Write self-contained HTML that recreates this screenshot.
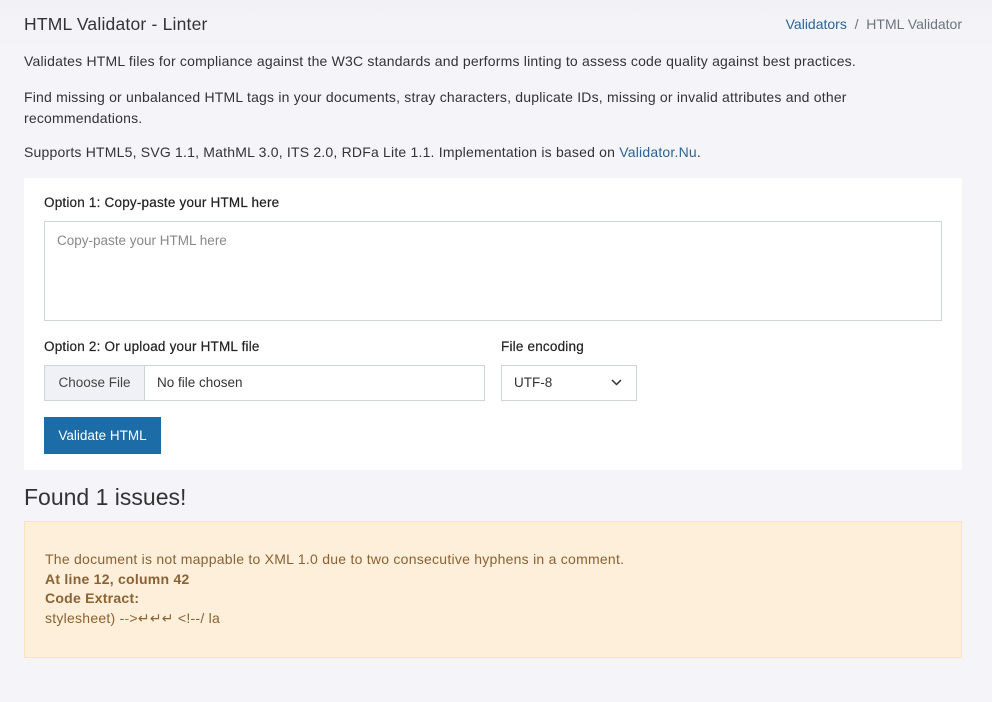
<!DOCTYPE html>
<html><head><style>
body{margin:0;background:#f5f5f9;font-family:"Liberation Sans",sans-serif;color:#333;width:992px;height:702px;overflow:hidden;}
.top{position:absolute;left:0;top:0;width:992px;height:50px;background:linear-gradient(#f2f2f6,#f5f5f9);}
h1{position:absolute;left:24px;top:14px;margin:0;font-size:17.5px;font-weight:normal;color:#333;letter-spacing:.2px}
.bc{position:absolute;right:30px;top:16px;font-size:14px;color:#6c757d}
.bc a{color:#2a6496}
p{position:absolute;left:24px;margin:0;font-size:14px;line-height:21px;width:860px;letter-spacing:.2px}
.card{position:absolute;left:24px;top:178px;width:938px;height:292px;background:#fff}
label{position:absolute;font-size:13.5px;color:#222;letter-spacing:.2px;-webkit-text-stroke:.2px #222}
.ta{position:absolute;left:20px;top:43px;width:896px;height:98px;border:1px solid #cfd4da;font-size:13.5px;color:#888}
.ta span{position:absolute;left:12px;top:11px}
.file{position:absolute;left:20px;top:187px;width:439px;height:34px;border:1px solid #cfd4da;font-size:13.5px}
.file .b{position:absolute;left:0;top:0;width:99px;height:34px;background:#eff1f6;border-right:1px solid #cfd4da;line-height:34px;text-align:center;color:#444}
.file .n{position:absolute;left:112px;top:0;line-height:34px;color:#333}
.sel{position:absolute;left:477px;top:187px;width:134px;height:34px;border:1px solid #cfd4da;font-size:13.5px;line-height:34px}
.sel span{position:absolute;left:12px}
.btn{position:absolute;left:20px;top:239px;width:117px;height:37px;background:#1c6ca8;color:#fff;font-size:13.5px;line-height:37px;text-align:center}
h2{position:absolute;left:24px;top:484px;margin:0;font-size:23px;font-weight:normal;color:#333}
.alert{position:absolute;left:24px;top:521px;width:936px;height:135px;background:#fdefd9;border:1px solid #fbe3bd;color:#8a6234;font-size:14px;line-height:19.5px;letter-spacing:.25px}
.alert div{position:absolute;left:20px;top:28px}
</style></head><body>
<div class="top"></div>
<h1>HTML Validator - Linter</h1>
<div class="bc"><a>Validators</a> &nbsp;/&nbsp; HTML Validator</div>
<p style="top:51px">Validates HTML files for compliance against the W3C standards and performs linting to assess code quality against best practices.</p>
<p style="top:87px">Find missing or unbalanced HTML tags in your documents, stray characters, duplicate IDs, missing or invalid attributes and other recommendations.</p>
<p style="top:142px">Supports HTML5, SVG 1.1, MathML 3.0, ITS 2.0, RDFa Lite 1.1. Implementation is based on <span style="color:#2a6496">Validator.Nu</span>.</p>
<div class="card">
<label style="left:20px;top:17px">Option 1: Copy-paste your HTML here</label>
<div class="ta"><span>Copy-paste your HTML here</span></div>
<label style="left:20px;top:161px">Option 2: Or upload your HTML file</label>
<label style="left:477px;top:161px">File encoding</label>
<div class="file"><div class="b">Choose File</div><div class="n">No file chosen</div></div>
<div class="sel"><span>UTF-8</span><svg style="position:absolute;right:14px;top:13px" width="11" height="7" viewBox="0 0 11 7"><path d="M1 1l4.5 4.5L10 1" stroke="#333" stroke-width="1.5" fill="none"/></svg></div>
<div class="btn">Validate HTML</div>
</div>
<h2>Found 1 issues!</h2>
<div class="alert"><div>The document is not mappable to XML 1.0 due to two consecutive hyphens in a comment.<br><b>At line 12, column 42</b><br><b>Code Extract:</b><br>stylesheet) -<span style="color:#e55">-</span>&gt;↵↵↵ &lt;!--/ la</div></div>
</body></html>
